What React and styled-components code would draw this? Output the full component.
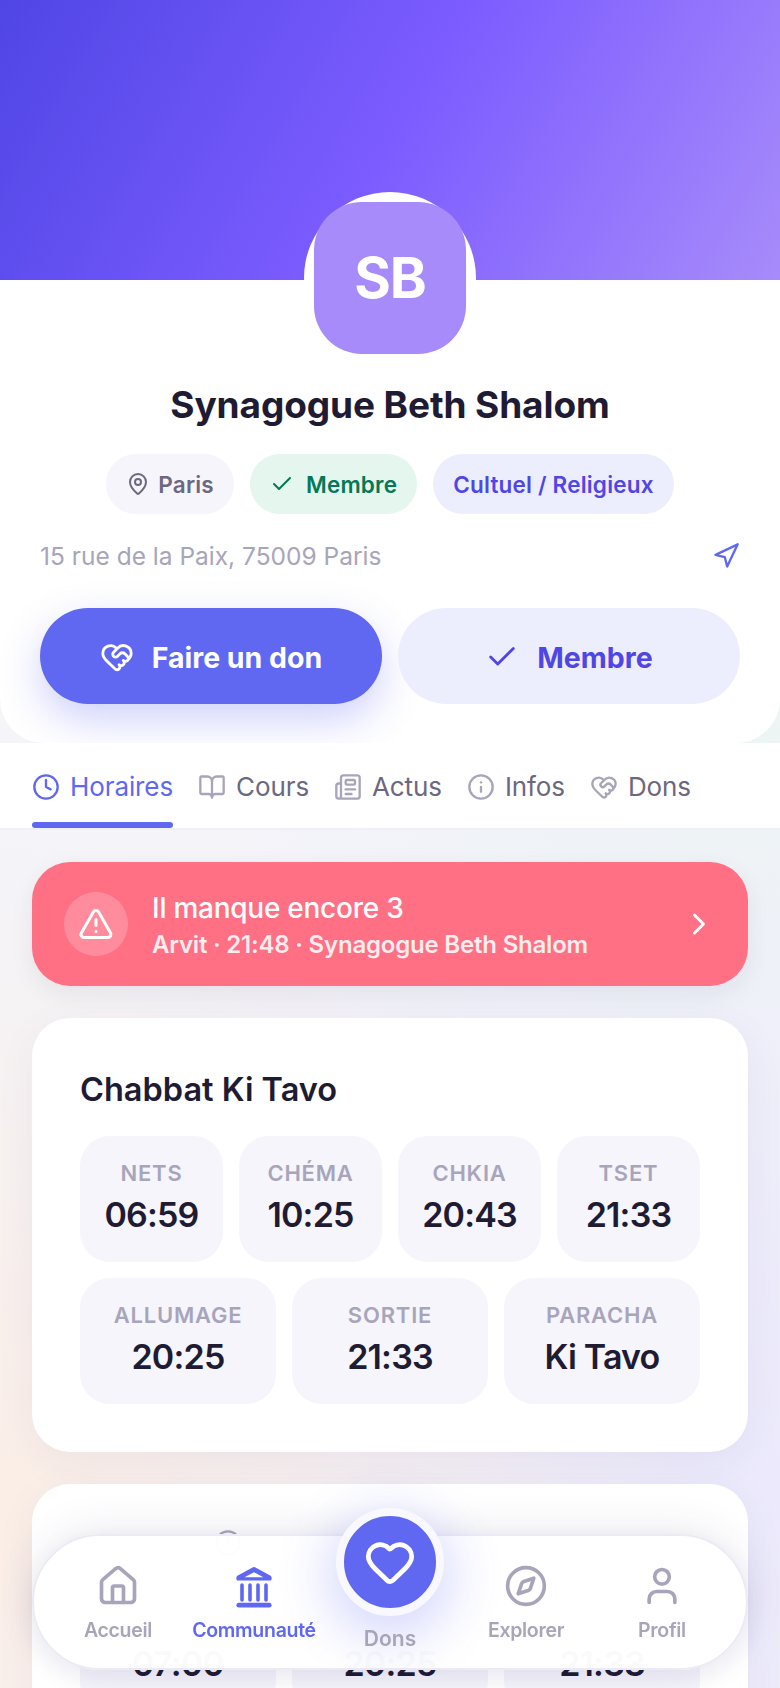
import React from "react";
import styled, { createGlobalStyle } from "styled-components";
import {
  BookOpen, Check, ChevronRight, Clock, Compass, Heart, HeartHandshake, House,
  Info, MapPin, Navigation, Newspaper, TriangleAlert, User,
} from "lucide-react";

const INK = "#1e1b33";
const MUTED = "#a8a5bb";
const SLATE = "#6b6880";
const BRAND = "#6068f2";
const DEEP = "#4f46e5";
const TINT = "#edeefd";
const TILE = "#f5f5fb";

const Global = createGlobalStyle`
  html, body { margin: 0; height: 100%; overflow: hidden; }
  body {
    font-family: Inter, "Noto Sans", sans-serif;
    color: ${INK};
    background:
      radial-gradient(circle at 0% 90%, #fbeee6 0, rgba(251,238,230,0) 40%),
      radial-gradient(circle at 100% 88%, #ebe9fb 0, rgba(235,233,251,0) 50%),
      radial-gradient(circle at 100% 42%, #edf7f3 0, rgba(237,247,243,0) 40%),
      #f4f4f9;
  }
  * { box-sizing: border-box; }
`;

const Page = styled.div`
  height: 1688px;
  overflow: hidden;
`;

const Hero = styled.div`
  height: 280px;
  background: linear-gradient(120deg, #4f46e5 0%, #7c5cff 50%, #a78bfa 100%);
`;

const Header = styled.header`
  background: #fff;
  border-radius: 0 0 44px 44px;
  padding: 0 40px 39px;
  display: flex;
  flex-direction: column;
  align-items: center;
`;

const AvatarHalo = styled.div`
  width: 172px;
  height: 172px;
  margin-top: -88px;
  border-radius: 50%;
  background: #fff;
  display: flex;
  align-items: center;
  justify-content: center;
  flex: none;
`;

const Avatar = styled.div`
  width: 152px;
  height: 152px;
  flex: none;
  border-radius: 48px;
  background: #a78bfa;
  color: #fff;
  font-size: 56px;
  font-weight: 700;
  letter-spacing: -1px;
  display: flex;
  align-items: center;
  justify-content: center;
`;

const Title = styled.h1`
  margin: 17px 0 0;
  font-size: 37px;
  line-height: 48px;
  font-weight: 700;
  letter-spacing: -0.1px;
  color: ${INK};
`;

const Chips = styled.div`
  display: flex;
  gap: 16px;
  margin-top: 25px;
`;

const Chip = styled.span`
  height: 60px;
  padding: 0 20px;
  border-radius: 30px;
  display: inline-flex;
  align-items: center;
  gap: ${(p) => p.$gap || 8}px;
  font-size: 22.5px;
  font-weight: 600;
  letter-spacing: 0.2px;
  color: ${(p) => p.$fg};
  background: ${(p) => p.$bg};
`;

const AddressRow = styled.div`
  align-self: stretch;
  display: flex;
  align-items: center;
  justify-content: space-between;
  margin-top: 24px;
  height: 36px;
  font-size: 24.5px;
  color: ${MUTED};
`;

const Actions = styled.div`
  align-self: stretch;
  display: grid;
  grid-template-columns: 1fr 1fr;
  gap: 16px;
  margin-top: 34px;
`;

const Action = styled.button`
  height: 96px;
  padding: 2px 0 0;
  border: 0;
  border-radius: 48px;
  display: flex;
  align-items: center;
  justify-content: center;
  gap: 18px;
  font-family: inherit;
  font-size: 28.5px;
  font-weight: 700;
  color: ${(p) => (p.$primary ? "#fff" : DEEP)};
  background: ${(p) => (p.$primary ? BRAND : TINT)};
  box-shadow: ${(p) => (p.$primary ? "0 16px 40px rgba(96,104,242,.3)" : "none")};
`;

const Tabs = styled.nav`
  position: relative;
  height: 87px;
  padding: 0 32px;
  background: #fff;
  border-bottom: 2px solid #efeff5;
  display: flex;
  gap: 25px;
`;

const Tab = styled.div`
  position: relative;
  height: 85px;
  padding-top: 2px;
  display: flex;
  align-items: center;
  gap: 10px;
  font-size: 26px;
  letter-spacing: -0.1px;
  color: ${(p) => (p.$active ? BRAND : SLATE)};
  & > svg { color: ${(p) => (p.$active ? BRAND : MUTED)}; flex: none; }
  ${(p) =>
    p.$active &&
    `&::after {
      content: "";
      position: absolute;
      left: 0; right: 0; bottom: 0;
      height: 6px;
      border-radius: 3px;
      background: ${BRAND};
    }`}
`;

const Content = styled.main`
  padding: 32px 32px 0;
  display: flex;
  flex-direction: column;
  gap: 32px;
`;

const Alert = styled.div`
  height: 124px;
  border-radius: 38px;
  background: #ff7085;
  color: #fff;
  padding: 0 31px 0 32px;
  display: flex;
  align-items: center;
  gap: 24px;
  box-shadow: 0 8px 24px rgba(30,27,51,.07);
`;

const AlertIcon = styled.div`
  width: 64px;
  height: 64px;
  border-radius: 50%;
  background: rgba(255,255,255,.2);
  display: flex;
  align-items: center;
  justify-content: center;
  flex: none;
`;

const AlertText = styled.div`
  flex: 1;
  padding-top: 4px;
  display: flex;
  flex-direction: column;
  gap: 2px;
`;

const AlertTitle = styled.div`
  font-size: 28px;
  line-height: 36px;
  font-weight: 500;
  letter-spacing: -0.25px;
`;

const AlertSub = styled.div`
  font-size: 24px;
  line-height: 34px;
  font-weight: 600;
  letter-spacing: -0.2px;
  color: rgba(255,255,255,.88);
`;

const Card = styled.section`
  background: #fff;
  border-radius: 38px;
  padding: 48px;
  box-shadow: 0 10px 40px rgba(60,50,140,.06);
`;

const CardTitle = styled.h2`
  margin: 0 0 22px;
  font-size: 32.5px;
  line-height: 48px;
  font-weight: 600;
  color: ${INK};
`;

const IconRow = styled.div`
  height: 56px;
  padding-left: 134px;
  color: ${MUTED};
  & > svg { display: block; margin-top: -3px; }
`;

const TileRow = styled.div`
  display: grid;
  grid-template-columns: repeat(${(p) => p.$cols}, 1fr);
  gap: 16px;
  & + & { margin-top: 16px; }
`;

const Tile = styled.div`
  background: ${TILE};
  border-radius: 30px;
  padding: 22px 6px 24px;
  text-align: center;
`;

const TileLabel = styled.div`
  min-height: 30px;
  font-size: 22px;
  line-height: 30px;
  font-weight: 600;
  color: ${MUTED};
  letter-spacing: 0.8px;
`;

const TileValue = styled.div`
  margin-top: 4px;
  font-size: 34px;
  line-height: 46px;
  font-weight: 600;
  letter-spacing: -0.8px;
  color: ${INK};
`;

const BottomNav = styled.nav`
  position: fixed;
  left: 32px;
  right: 32px;
  bottom: 18px;
  height: 136px;
  padding: 0 16px;
  border-radius: 68px;
  background: rgba(255,255,255,.98);
  border: 2px solid #ecebf5;
  box-shadow: 0 -6px 40px rgba(50,45,110,.09), 0 8px 30px rgba(50,45,110,.07);
  display: grid;
  grid-template-columns: repeat(5, 1fr);
`;

const NavItem = styled.div`
  display: flex;
  flex-direction: column;
  align-items: center;
  padding-top: 28px;
  gap: 9px;
  color: ${(p) => (p.$active ? BRAND : MUTED)};
`;

const NavLabel = styled.span`
  font-size: 19.5px;
  line-height: 26px;
  font-weight: 600;
  letter-spacing: -0.3px;
`;

const FabItem = styled.div`
  display: flex;
  flex-direction: column;
  align-items: center;
  color: ${MUTED};
`;

const FabLabel = styled(NavLabel)`
  font-size: 21px;
  letter-spacing: 0;
`;

const Fab = styled.div`
  width: 108px;
  height: 108px;
  flex: none;
  margin-top: -28px;
  margin-bottom: 10px;
  border-radius: 50%;
  background: ${BRAND};
  border: 8px solid #f8f8fe;
  color: #fff;
  display: flex;
  align-items: center;
  justify-content: center;
  box-shadow: 0 14px 50px 10px rgba(96,104,242,.24);
`;

function Landmark() {
  return (
    <svg width="46" height="44" viewBox="0 0 44 44" fill="none">
      <path d="M21 3.2a2 2 0 0 1 2 0l15.2 8.2c1 .5 1.4 1.2 1.4 2.1v1.4c0 .9-.7 1.6-1.6 1.6H6c-.9 0-1.600-.7-1.600-1.600v-1.400c0-.9.4-1.600 1.400-2.100z" fill="currentColor" />
      <path d="M22 8.200 31.500 13.300H12.500z" fill="#fff" />
      <path d="M10 21v15M18 21v15M26 21v15M34 21v15" stroke="currentColor" strokeWidth="3.600" strokeLinecap="round" />
      <rect x="4.400" y="38.800" width="35.200" height="4.800" rx="2.400" fill="currentColor" />
    </svg>
  );
}

const row1 = [["NETS", "06:59"], ["CHÉMA", "10:25"], ["CHKIA", "20:43"], ["TSET", "21:33"]];
const row2 = [["ALLUMAGE", "20:25"], ["SORTIE", "21:33"], ["PARACHA", "Ki Tavo"]];
const row3 = [["", "07:00"], ["", "20:25"], ["", "21:33"]];

const TileGroup = ({ items }) => (
  <TileRow $cols={items.length}>
    {items.map(([label, value]) => (
      <Tile key={value + label}>
        <TileLabel>{label}</TileLabel>
        <TileValue>{value}</TileValue>
      </Tile>
    ))}
  </TileRow>
);

export default function App() {
  return (
    <Page>
      <Global />
      <Hero />
      <Header>
        <AvatarHalo>
          <Avatar>SB</Avatar>
        </AvatarHalo>
        <Title>Synagogue Beth Shalom</Title>
        <Chips>
          <Chip $fg={SLATE} $bg={TILE}><MapPin size={24} />Paris</Chip>
          <Chip $fg="#047857" $bg="#e4f6ee" $gap={12}><Check size={24} />Membre</Chip>
          <Chip $fg={DEEP} $bg={TINT}>Cultuel / Religieux</Chip>
        </Chips>
        <AddressRow>
          15 rue de la Paix, 75009 Paris
          <Navigation size={28} color={BRAND} />
        </AddressRow>
        <Actions>
          <Action $primary><HeartHandshake size={34} />Faire un don</Action>
          <Action><Check size={34} />Membre</Action>
        </Actions>
      </Header>
      <Tabs>
        <Tab $active><Clock size={28} />Horaires</Tab>
        <Tab><BookOpen size={28} />Cours</Tab>
        <Tab><Newspaper size={28} />Actus</Tab>
        <Tab><Info size={28} />Infos</Tab>
        <Tab><HeartHandshake size={28} />Dons</Tab>
      </Tabs>
      <Content>
        <Alert>
          <AlertIcon><TriangleAlert size={36} /></AlertIcon>
          <AlertText>
            <AlertTitle>Il manque encore 3</AlertTitle>
            <AlertSub>Arvit · 21:48 · Synagogue Beth Shalom</AlertSub>
          </AlertText>
          <ChevronRight size={36} strokeWidth={2} />
        </Alert>
        <Card>
          <CardTitle>Chabbat Ki Tavo</CardTitle>
          <TileGroup items={row1} />
          <TileGroup items={row2} />
        </Card>
        <Card>
          <IconRow><Clock size={28} /></IconRow>
          <TileGroup items={row3} />
        </Card>
      </Content>
      <BottomNav>
        <NavItem><House size={44} strokeWidth={2} /><NavLabel>Accueil</NavLabel></NavItem>
        <NavItem $active><Landmark /><NavLabel>Communauté</NavLabel></NavItem>
        <FabItem>
          <Fab><Heart size={52} strokeWidth={2.2} /></Fab>
          <FabLabel>Dons</FabLabel>
        </FabItem>
        <NavItem><Compass size={44} strokeWidth={2} /><NavLabel>Explorer</NavLabel></NavItem>
        <NavItem><User size={44} strokeWidth={2} /><NavLabel>Profil</NavLabel></NavItem>
      </BottomNav>
    </Page>
  );
}
